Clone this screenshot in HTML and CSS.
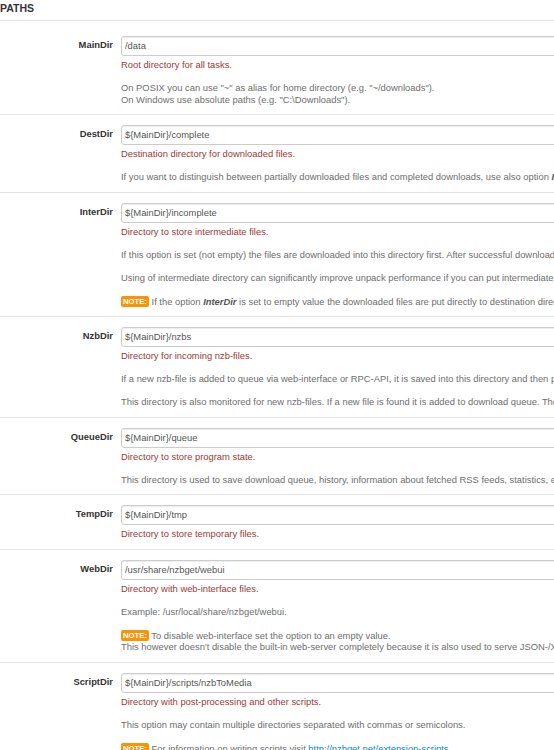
FILE: index.html
```html
<!DOCTYPE html>
<html lang="en">
<head>
<meta charset="utf-8">
<title>Paths</title>
<link rel="stylesheet" href="styles.css">
</head>
<body>
<div class="page">
  <h2 class="section-title">PATHS</h2>

  <div class="option">
    <label class="opt-label">MainDir</label>
    <div class="opt-controls">
      <input class="opt-input" type="text" value="/data">
      <p class="opt-summary">Root directory for all tasks.</p>
      <p class="opt-text">On POSIX you can use "~" as alias for home directory (e.g. "~/downloads").<br>On Windows use absolute paths (e.g. "C:\Downloads").</p>
    </div>
  </div>

  <div class="option">
    <label class="opt-label">DestDir</label>
    <div class="opt-controls">
      <input class="opt-input" type="text" value="${MainDir}/complete">
      <p class="opt-summary">Destination directory for downloaded files.</p>
      <p class="opt-text">If you want to distinguish between partially downloaded files and completed downloads, use also option <b><i>InterDir</i></b>.</p>
    </div>
  </div>

  <div class="option">
    <label class="opt-label">InterDir</label>
    <div class="opt-controls">
      <input class="opt-input" type="text" value="${MainDir}/incomplete">
      <p class="opt-summary">Directory to store intermediate files.</p>
      <p class="opt-text">If this option is set (not empty) the files are downloaded into this directory first. After successful download of nzb-file (possibly after par-repair) the files are moved to destination directory.</p>
      <p class="opt-text">Using of intermediate directory can significantly improve unpack performance if you can put intermediate directory and destination directory on separate physical hard drives.</p>
      <p class="opt-text opt-note"><span class="note-badge">NOTE:</span> If the option <b><i>InterDir</i></b> is set to empty value the downloaded files are put directly to destination directory.</p>
    </div>
  </div>

  <div class="option">
    <label class="opt-label">NzbDir</label>
    <div class="opt-controls">
      <input class="opt-input" type="text" value="${MainDir}/nzbs">
      <p class="opt-summary">Directory for incoming nzb-files.</p>
      <p class="opt-text">If a new nzb-file is added to queue via web-interface or RPC-API, it is saved into this directory and then processed by scan-script.</p>
      <p class="opt-text">This directory is also monitored for new nzb-files. If a new file is found it is added to download queue. The directory can have sub-directories.</p>
    </div>
  </div>

  <div class="option">
    <label class="opt-label">QueueDir</label>
    <div class="opt-controls">
      <input class="opt-input" type="text" value="${MainDir}/queue">
      <p class="opt-summary">Directory to store program state.</p>
      <p class="opt-text">This directory is used to save download queue, history, information about fetched RSS feeds, statistics, etc.</p>
    </div>
  </div>

  <div class="option">
    <label class="opt-label">TempDir</label>
    <div class="opt-controls">
      <input class="opt-input" type="text" value="${MainDir}/tmp">
      <p class="opt-summary">Directory to store temporary files.</p>
    </div>
  </div>

  <div class="option">
    <label class="opt-label">WebDir</label>
    <div class="opt-controls">
      <input class="opt-input" type="text" value="/usr/share/nzbget/webui">
      <p class="opt-summary">Directory with web-interface files.</p>
      <p class="opt-text">Example: /usr/local/share/nzbget/webui.</p>
      <p class="opt-text opt-note"><span class="note-badge">NOTE:</span> To disable web-interface set the option to an empty value.<br>This however doesn't disable the built-in web-server completely because it is also used to serve JSON-/XML-RPC requests.</p>
    </div>
  </div>

  <div class="option">
    <label class="opt-label">ScriptDir</label>
    <div class="opt-controls">
      <input class="opt-input" type="text" value="${MainDir}/scripts/nzbToMedia">
      <p class="opt-summary">Directory with post-processing and other scripts.</p>
      <p class="opt-text">This option may contain multiple directories separated with commas or semicolons.</p>
      <p class="opt-text opt-note"><span class="note-badge">NOTE:</span> For information on writing scripts visit <a class="opt-link" href="#">http://nzbget.net/extension-scripts</a>.</p>
    </div>
  </div>
</div>
</body>
</html>
```

FILE: styles.css
```css
html, body {
  margin: 0;
  padding: 0;
  background: #ffffff;
  overflow: hidden;
}

body {
  font-family: "Liberation Sans", Arial, Helvetica, sans-serif;
  font-size: 9.38px;
  line-height: 11.5px;
  color: #333333;
}

.page {
  width: 1200px;
}

.section-title {
  margin: 0 0 5px 0;
  padding: 2px 0 5px 0;
  font-size: 10.5px;
  line-height: 13px;
  font-weight: bold;
  color: #333333;
  border-bottom: 1px solid #e5e5e5;
}

.option {
  display: grid;
  grid-template-columns: 113px 1fr;
  column-gap: 8px;
  padding: 10px 0 8px 0;
  border-bottom: 1px solid #e5e5e5;
}

.opt-label {
  display: block;
  height: 19px;
  line-height: 19px;
  text-align: right;
  font-weight: bold;
  color: #333333;
  white-space: nowrap;
}

.opt-controls {
  min-width: 0;
}

.opt-input {
  display: block;
  box-sizing: border-box;
  width: 100%;
  height: 20px;
  margin: 0;
  padding: 0 3px;
  border: 1px solid #cccccc;
  border-radius: 3px;
  box-shadow: inset 0 1px 1px rgba(0, 0, 0, 0.075);
  font-family: inherit;
  font-size: 9.38px;
  color: #555555;
  background: #ffffff;
  outline: none;
}

.opt-summary {
  margin: 4px 0 0 0;
  color: #9d3838;
  white-space: nowrap;
}

.opt-text {
  margin: 11.5px 0 0 0;
  color: #6e6e6e;
  white-space: nowrap;
}

.opt-text b {
  color: #555555;
}

.note-badge {
  display: inline-block;
  padding: 1px 2px;
  font-size: 7.7px;
  line-height: 9px;
  font-weight: bold;
  color: #ffffff;
  background: #f89406;
  border-radius: 2px;
  vertical-align: 1px;
}

.opt-link {
  color: #0088cc;
  text-decoration: none;
}
```
